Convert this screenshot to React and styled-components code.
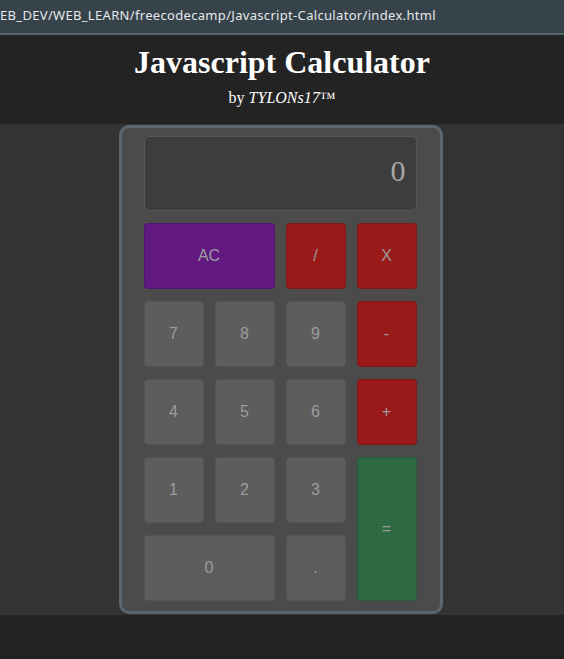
import React from "react";
import styled, { createGlobalStyle } from "styled-components";

const Global = createGlobalStyle`
  html, body { margin: 0; padding: 0; background: #232323; }
  body { min-height: 659px; }
`;

const Page = styled.div`
  display: flex;
  flex-direction: column;
  min-height: 659px;
  background: #232323;
`;

const UrlBar = styled.div`
  height: 35px;
  background: #36434b;
  border-bottom: 2px solid #56646c;
  display: flex;
  align-items: center;
  overflow: hidden;
  white-space: nowrap;
  color: #e6e8ea;
  font-family: "Noto Sans", "DejaVu Sans", sans-serif;
  font-size: 13px;
  letter-spacing: 0.32px;
  padding-bottom: 4px;
  box-sizing: border-box;
`;

const Header = styled.header`
  height: 89px;
  background: #232323;
  text-align: center;
  color: #fff;
  font-family: "Liberation Serif", "Times New Roman", serif;
`;

const Title = styled.h1`
  margin: 0;
  padding-top: 7px;
  font-size: 32px;
  line-height: 40px;
  font-weight: bold;
`;

const Byline = styled.div`
  font-size: 16px;
  line-height: 20px;
  margin-top: 6px;
  em { font-style: italic; }
`;

const Main = styled.main`
  background: #333333;
  padding: 1px 3px 1px 0;
  display: flex;
  justify-content: center;
`;

const Calculator = styled.div`
  width: 324px;
  box-sizing: border-box;
  background: #4b4b4b;
  border: 3px solid #5b6770;
  border-radius: 10px;
  padding: 8px 23px 10px 22px;
  display: flex;
  flex-direction: column;
  gap: 12px;
`;

const Display = styled.div`
  height: 75px;
  box-sizing: border-box;
  background: #3d3d3d;
  border: 1px solid #575757;
  border-radius: 5px;
  display: flex;
  align-items: center;
  justify-content: flex-end;
  padding: 0 10px 6px;
  color: #a6a6a6;
  font-family: "Liberation Serif", "Times New Roman", serif;
  font-size: 30px;
`;

const Keys = styled.div`
  display: grid;
  grid-template-columns: repeat(4, 1fr);
  grid-auto-rows: 66px;
  column-gap: 11px;
  row-gap: 12px;
`;

const colors = {
  num: "#5d5d5d",
  clear: "#621a82",
  op: "#9a1a1a",
  eq: "#2d6a42",
};

const Key = styled.button`
  background: ${(p) => colors[p.$kind || "num"]};
  border: 1px solid ${(p) => (p.$kind && p.$kind !== "num" ? "rgba(0,0,0,0.15)" : "#545454")};
  border-radius: 4px;
  color: #9c9c9c;
  font-family: "Liberation Sans", Arial, sans-serif;
  font-size: 16px;
  padding: 0;
  grid-column: span ${(p) => p.$cols || 1};
  grid-row: span ${(p) => p.$rows || 1};
`;

export default function App() {
  return (
    <>
      <Global />
      <Page>
        <UrlBar>EB_DEV/WEB_LEARN/freecodecamp/Javascript-Calculator/index.html</UrlBar>
        <Header>
          <Title>Javascript Calculator</Title>
          <Byline>
            by <em>TYLONs17™</em>
          </Byline>
        </Header>
        <Main>
          <Calculator>
            <Display>0</Display>
            <Keys>
              <Key $kind="clear" $cols={2}>AC</Key>
              <Key $kind="op">/</Key>
              <Key $kind="op">X</Key>
              <Key>7</Key>
              <Key>8</Key>
              <Key>9</Key>
              <Key $kind="op">-</Key>
              <Key>4</Key>
              <Key>5</Key>
              <Key>6</Key>
              <Key $kind="op">+</Key>
              <Key>1</Key>
              <Key>2</Key>
              <Key>3</Key>
              <Key $kind="eq" $rows={2}>=</Key>
              <Key $cols={2}>0</Key>
              <Key>.</Key>
            </Keys>
          </Calculator>
        </Main>
      </Page>
    </>
  );
}
